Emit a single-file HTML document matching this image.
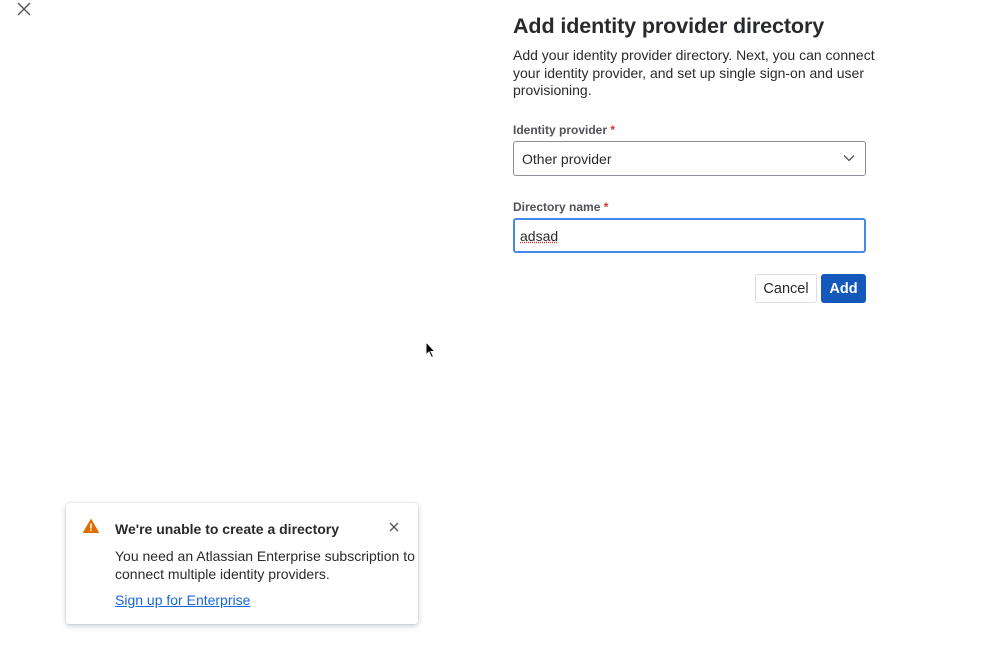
<!DOCTYPE html>
<html><head><meta charset="utf-8"><style>
body{margin:0;width:999px;height:650px;background:#fff;font-family:"Liberation Sans",sans-serif;color:#292a2e;position:relative;overflow:hidden}
.a{position:absolute}
h1{position:absolute;left:513px;top:14px;margin:0;font-size:21.5px;font-weight:bold;color:#292a2e;letter-spacing:-0.1px}
.desc{left:513px;top:47px;width:372px;font-size:14px;line-height:17.5px;color:#292a2e}
.lbl{font-size:12px;font-weight:bold;color:#505258}
.lbl span{color:#c9372c}
.box{border-radius:3px;box-sizing:border-box;font-size:14px;color:#292a2e}
.btn{border-radius:3px;font-size:14.5px;box-sizing:border-box;display:flex;align-items:center;justify-content:center;padding-top:1px}
</style></head><body>
<svg class="a" style="left:17px;top:2px" width="14" height="14" viewBox="0 0 14 14"><path d="M1 1L13 13M13 1L1 13" stroke="#505258" stroke-width="1.4"/></svg>
<h1>Add identity provider directory</h1>
<div class="a desc">Add your identity provider directory. Next, you can connect your identity provider, and set up single sign-on and user provisioning.</div>
<div class="a lbl" style="left:513px;top:123px">Identity provider <span>*</span></div>
<div class="a box" style="left:513px;top:141px;width:353px;height:35px;border:1px solid #8c8f97;padding:9px 8px;font-size:14px">Other provider</div>
<svg class="a" style="left:843px;top:153px" width="12" height="10" viewBox="0 0 12 10"><path d="M1 2.5L6 7.5L11 2.5" fill="none" stroke="#505258" stroke-width="1.3"/></svg>
<div class="a lbl" style="left:513px;top:200px">Directory name <span>*</span></div>
<div class="a box" style="left:513px;top:218px;width:353px;height:35px;border:2px solid #4688ec;padding:8px 5px;font-size:14px"><span style="text-decoration:underline dotted #c9372c">adsad</span></div>
<div class="a btn" style="left:755px;top:274px;width:62px;height:29px;border:1px solid #dddee1;color:#292a2e">Cancel</div>
<div class="a btn" style="left:821px;top:274px;width:45px;height:29px;background:#1558bc;color:#fff;font-weight:bold">Add</div>
<svg class="a" style="left:425px;top:341px" width="12" height="18" viewBox="0 0 12 18"><path d="M1 1L1 14L4 11L6.5 16.5L8.5 15.5L6 10.5L10 10.5Z" fill="#000" stroke="#fff" stroke-width="1"/></svg>
<div class="a" style="left:66px;top:503px;width:352px;height:121px;background:#fff;border-radius:3px;box-shadow:0 2px 6px rgba(9,30,66,.22),0 0 1px rgba(9,30,66,.3)"></div>
<svg class="a" style="left:83px;top:519px" width="16" height="14" viewBox="0 0 16 14"><path d="M8 0.5L15.5 13.5H0.5Z" fill="#e06c00" stroke="#e06c00" stroke-linejoin="round"/><rect x="7.2" y="4.5" width="1.6" height="5" fill="#fff"/><rect x="7.2" y="10.5" width="1.6" height="1.6" fill="#fff"/></svg>
<div class="a" style="left:115px;top:521px;font-size:14px;font-weight:bold;color:#292a2e">We're unable to create a directory</div>
<svg class="a" style="left:389px;top:522px" width="10" height="10" viewBox="0 0 10 10"><path d="M1 1L9 9M9 1L1 9" stroke="#505258" stroke-width="1.3"/></svg>
<div class="a" style="left:115px;top:547px;width:300px;font-size:14px;line-height:18px;color:#292a2e">You need an Atlassian Enterprise subscription to connect multiple identity providers.</div>
<div class="a" style="left:115px;top:592px;font-size:14px;color:#1868db;text-decoration:underline">Sign up for Enterprise</div>
</body></html>
